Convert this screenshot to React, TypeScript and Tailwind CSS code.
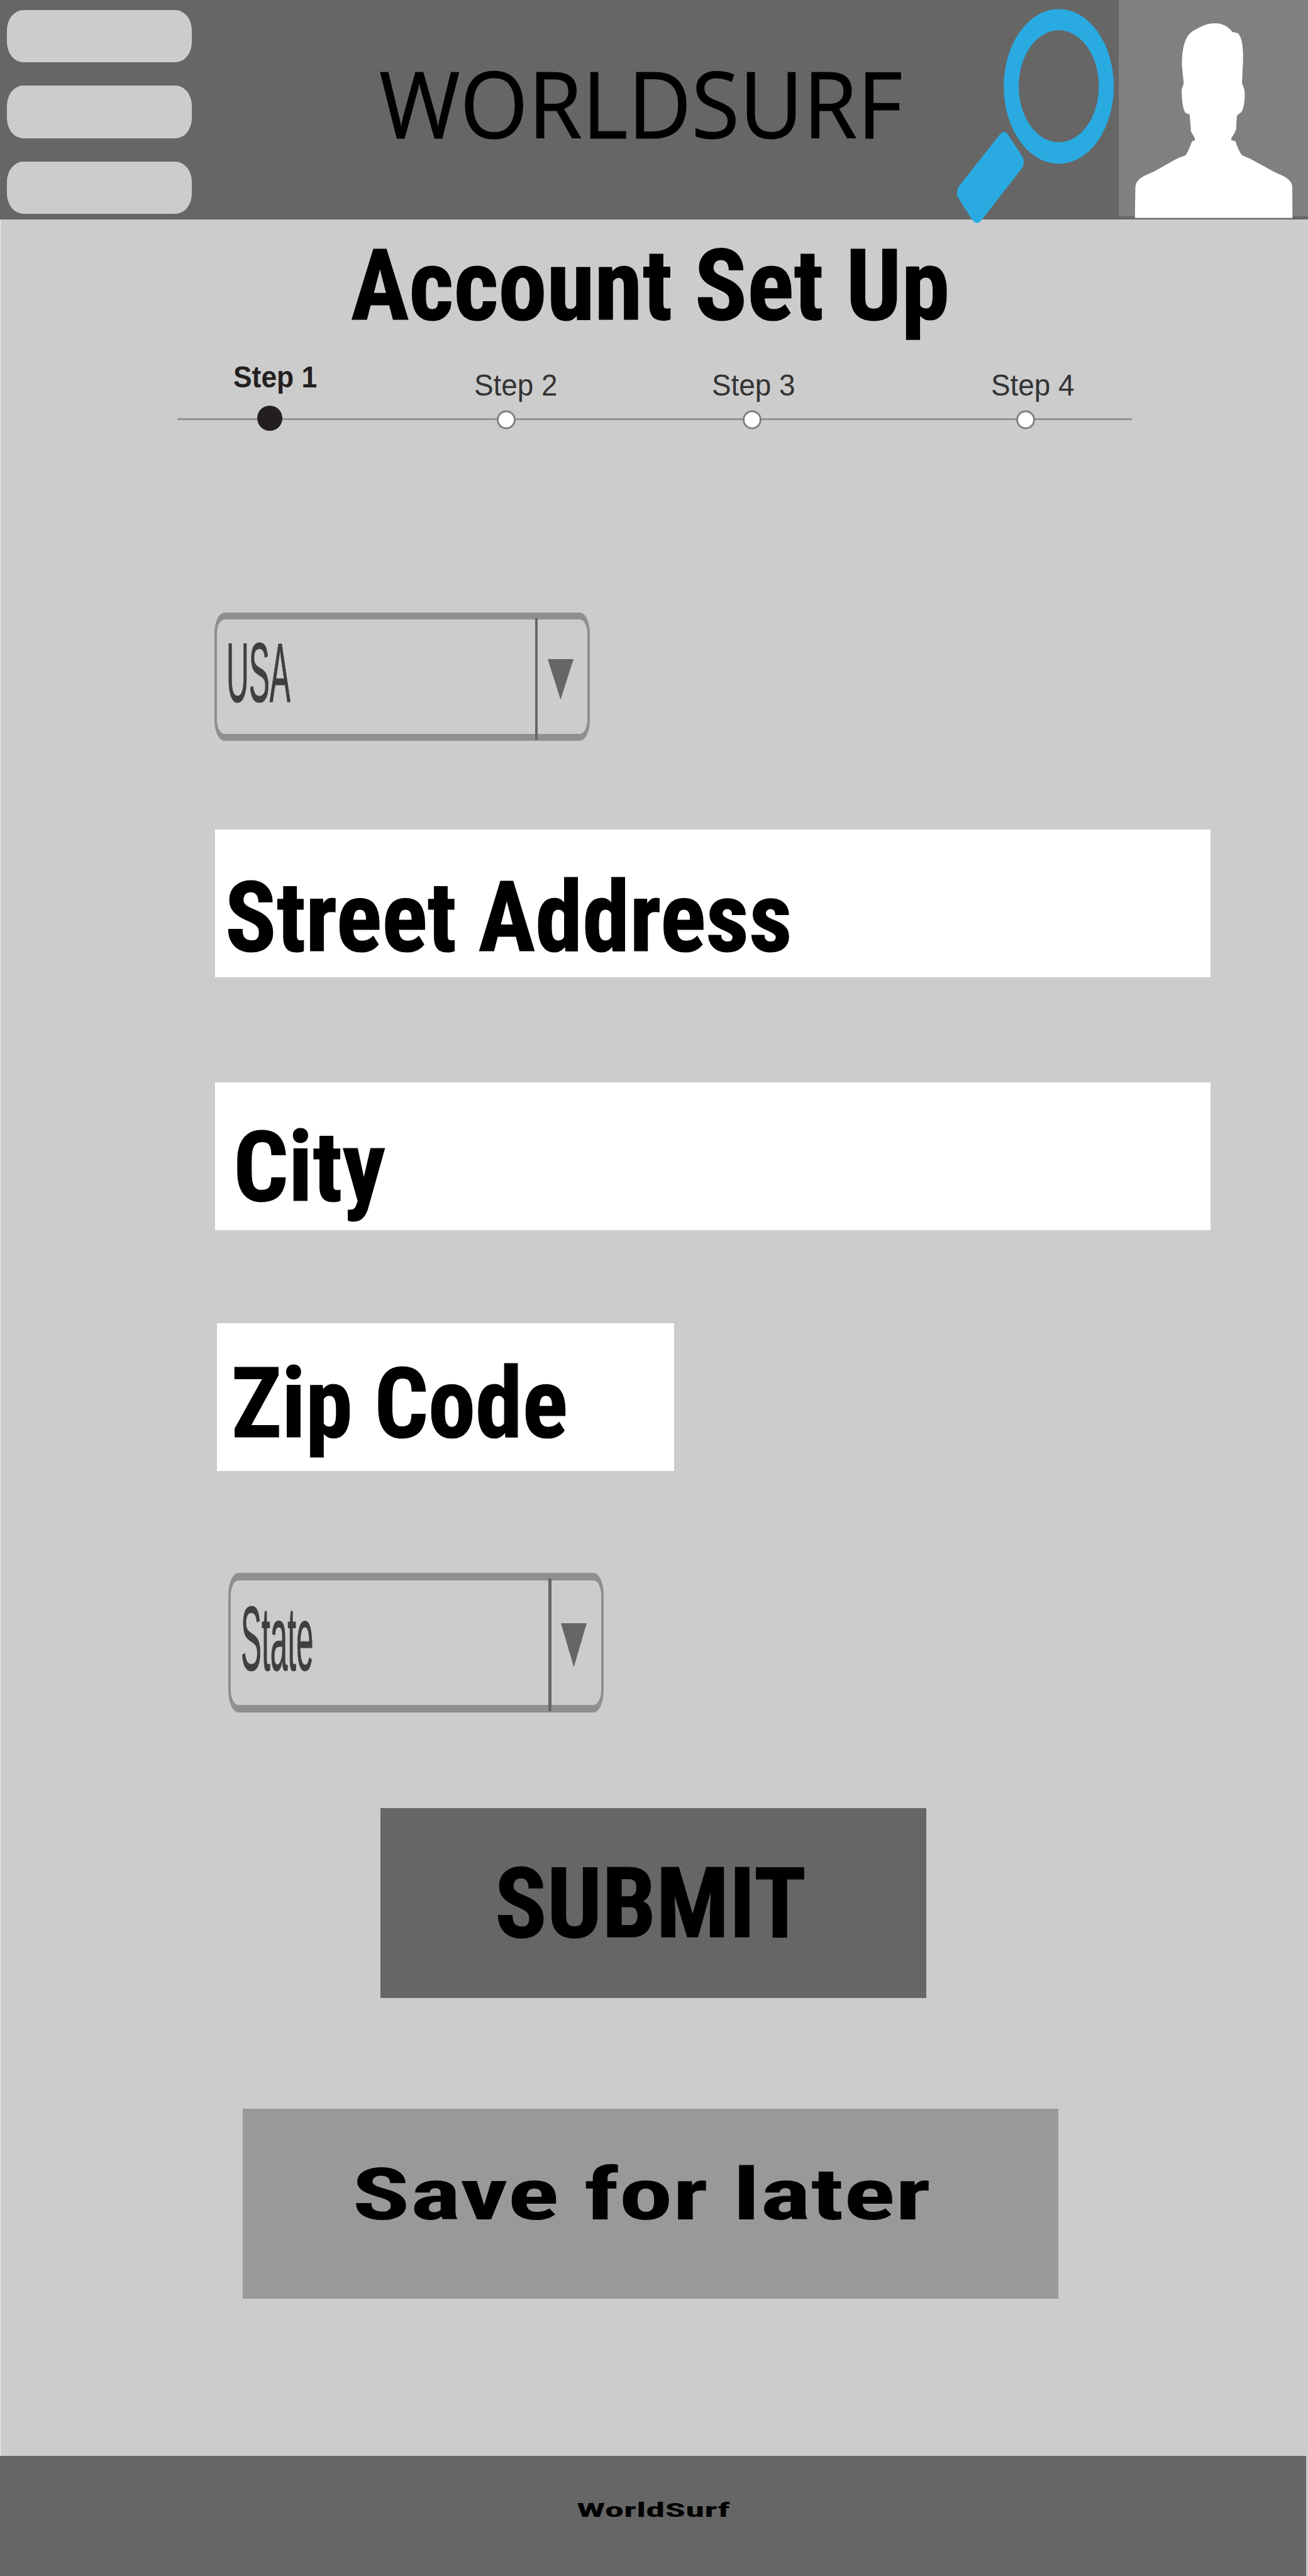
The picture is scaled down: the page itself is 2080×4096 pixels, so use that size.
function MenuIcon() {
  return (
    <button aria-label="Menu" className="ml-[11px] mt-[15.5px] flex w-[294px] flex-col gap-[37px]">
      <span className="h-[83.5px] rounded-[26px/32px] bg-[#ccc]" />
      <span className="h-[83.5px] rounded-[26px/32px] bg-[#ccc]" />
      <span className="h-[83.5px] rounded-[26px/32px] bg-[#ccc]" />
    </button>
  );
}

function SearchIcon() {
  return (
    <svg
      viewBox="0 0 763 1074"
      preserveAspectRatio="none"
      className="h-[349px] w-[284.5px] shrink-0 overflow-visible"
      fill="#29abe2"
    >
      <path
        fillRule="evenodd"
        d="M506 44.5A234.5 378.5 0 0 1 506 801.5A234.5 378.5 0 0 1 506 44.5ZM506 148A171 274 0 0 0 506 696A171 274 0 0 0 506 148Z"
      />
      <path d="M256 656Q271 634 287 655L350 765Q364 792 350 822L176 1078Q157 1104 138 1078L77 968Q64 940 81 910Z" />
    </svg>
  );
}

function Avatar() {
  return (
    <div className="h-[344px] w-[300.6px] shrink-0 bg-[#808080]">
      <svg viewBox="763 0 805 1074" preserveAspectRatio="none" className="h-[349px] w-full" fill="#fff">
        <path d="M832 1066L834 912Q838 880 870 862Q890 850 912 840L1005 780Q1020 770 1048 760Q1060 740 1075 692L1088 686Q1088 675 1071 645L1065 560L1048 553Q1032 530 1031 440L1040 408Q1033 340 1032 310Q1033 190 1075 155Q1130 114 1172 114Q1220 114 1247 157Q1270 159 1274 167Q1296 200 1292 310L1288 408Q1300 435 1300 465Q1298 530 1284 550Q1268 560 1266 570Q1264 600 1263 633Q1256 655 1243 675L1242 686L1260 691Q1270 730 1288 760Q1310 770 1325 778L1420 838Q1440 850 1455 856Q1500 880 1502 912L1503 1066Z" />
      </svg>
    </div>
  );
}

const condensed =
  "inline-block origin-left whitespace-nowrap font-['Roboto_Condensed',Roboto,sans-serif] font-bold leading-none text-black";
const heavy = "[-webkit-text-stroke:1.2px_black]";

function Arrow({ className }: { className: string }) {
  return (
    <svg viewBox="0 0 10 10" preserveAspectRatio="none" className={className} fill="#666">
      <path d="M0 0H10L5 10Z" />
    </svg>
  );
}

function Track() {
  const dot = "size-[30px] shrink-0 translate-y-[1.5px] rounded-full border-[3px] border-[#808080] bg-white";
  const line = "h-[3px] bg-[#939393]";
  return (
    <div className="ml-[281px] mt-[10px] flex h-10 w-[1518px] items-center">
      <span className={`${line} w-[126.5px]`} />
      <span className="size-10 shrink-0 -translate-y-px rounded-full bg-[#231f20]" />
      <span className={`${line} w-[341.7px]`} />
      <span className={dot} />
      <span className={`${line} w-[360.6px]`} />
      <span className={dot} />
      <span className={`${line} w-[405.2px]`} />
      <span className={dot} />
      <span className={`${line} grow`} />
    </div>
  );
}

export default function App() {
  const step = "mt-[13px] origin-left scale-x-[.955] whitespace-nowrap text-[48px] leading-none text-[#333]";
  return (
    <div className="flex h-[4096px] w-[2080px] flex-col overflow-hidden bg-[#ccc] font-['Liberation_Sans',Arial,sans-serif]">
      <header className="relative z-10 flex h-[349px] w-[2080px] shrink-0 items-start bg-[#666]">
        <MenuIcon />
        <div className="ml-[297.6px] mt-[89.5px] w-[892.4px]">
          <span className="inline-block origin-left scale-x-[.947] whitespace-nowrap font-['Open_Sans',sans-serif] text-[147px] leading-none text-black [-webkit-text-stroke:1.2px_black]">
            WORLDSURF
          </span>
        </div>
        <SearchIcon />
        <Avatar />
      </header>

      <main className="flex grow flex-col items-start border-l border-[#f2f2f2]">
        <h1 className="ml-[557px] mt-[27px] h-[157px]">
          <span className={`${condensed} ${heavy} scale-x-[.985] text-[157px]`}>Account Set Up</span>
        </h1>

        <div className="ml-[370px] mt-[43px] flex h-[60px] items-start">
          <div className="w-[382.5px]">
            <div className="origin-left scale-x-[.925] whitespace-nowrap text-[48px] font-bold leading-none text-[#231f20]">
              Step 1
            </div>
          </div>
          <div className="w-[378px]">
            <div className={step}>Step 2</div>
          </div>
          <div className="w-[444.5px]">
            <div className={step}>Step 3</div>
          </div>
          <div className="w-[200px]">
            <div className={step}>Step 4</div>
          </div>
        </div>
        <Track />

        <div className="ml-[340px] mt-[288px] flex h-[204px] w-[597px] rounded-[16px/33px] border-x-[4.5px] border-y-[11px] border-[#8f8f8f]">
          <div className="ml-[15px] mt-[18px] w-[490.5px]">
            <span className="inline-block origin-left scale-x-[.37] text-[134px] leading-none text-[#3f3f3f] [-webkit-text-stroke:1.2px_#3f3f3f]">
              USA
            </span>
          </div>
          <div className="-mt-[2px] h-[193px] w-[4.7px] shrink-0 bg-[#666]" />
          <Arrow className="ml-[15.5px] mt-[62.5px] h-[64.5px] w-[41px] shrink-0" />
        </div>

        <div className="ml-[340.5px] mt-[141px] h-[235px] w-[1583.5px] bg-white pl-[16.5px] pt-[61.5px]">
          <span className={`${condensed} ${heavy} scale-x-[.97] text-[156px]`}>Street Address</span>
        </div>
        <div className="ml-[340.5px] mt-[167px] h-[235px] w-[1583.5px] bg-white pl-[29px] pt-[57px]">
          <span className={`${condensed} ${heavy} scale-x-[.985] text-[156px]`}>City</span>
        </div>
        <div className="ml-[343.5px] mt-[148px] h-[235px] w-[727px] bg-white pl-[23.5px] pt-[49.5px]">
          <span className={`${condensed} ${heavy} scale-x-[.966] text-[156px]`}>Zip Code</span>
        </div>

        <div className="ml-[361.5px] mt-[162px] flex h-[222px] w-[597px] rounded-[16px/36px] border-x-[4.5px] border-y-[12px] border-[#8f8f8f]">
          <div className="ml-[16px] mt-[21px] w-[489.5px]">
            <span className="inline-block origin-left scale-x-[.341] text-[145px] leading-none text-[#3f3f3f] [-webkit-text-stroke:1.2px_#3f3f3f]">
              State
            </span>
          </div>
          <div className="-mt-[3px] h-[211px] w-[4.7px] shrink-0 bg-[#666]" />
          <Arrow className="ml-[15.5px] mt-[67.5px] h-[70px] w-[41px] shrink-0" />
        </div>

        <button className="ml-[603.5px] mt-[152px] flex h-[302px] w-[868px] items-start bg-[#666] pl-[182px] pt-[74px]">
          <span className={`${condensed} ${heavy} scale-x-[.983] text-[156px]`}>SUBMIT</span>
        </button>
        <button className="ml-[385px] mt-[176px] flex h-[302px] w-[1297px] items-start bg-[#999] pl-[174px] pt-[79px]">
          <span className={`${condensed} scale-x-[1.487] text-[115px]`}>Save for later</span>
        </button>
      </main>

      <footer className="flex h-[191px] w-[2077px] shrink-0 items-start bg-[#666] pl-[916.5px] pt-[70.5px]">
        <span className={`${condensed} scale-x-[1.93] text-[31.5px]`}>WorldSurf</span>
      </footer>
    </div>
  );
}
